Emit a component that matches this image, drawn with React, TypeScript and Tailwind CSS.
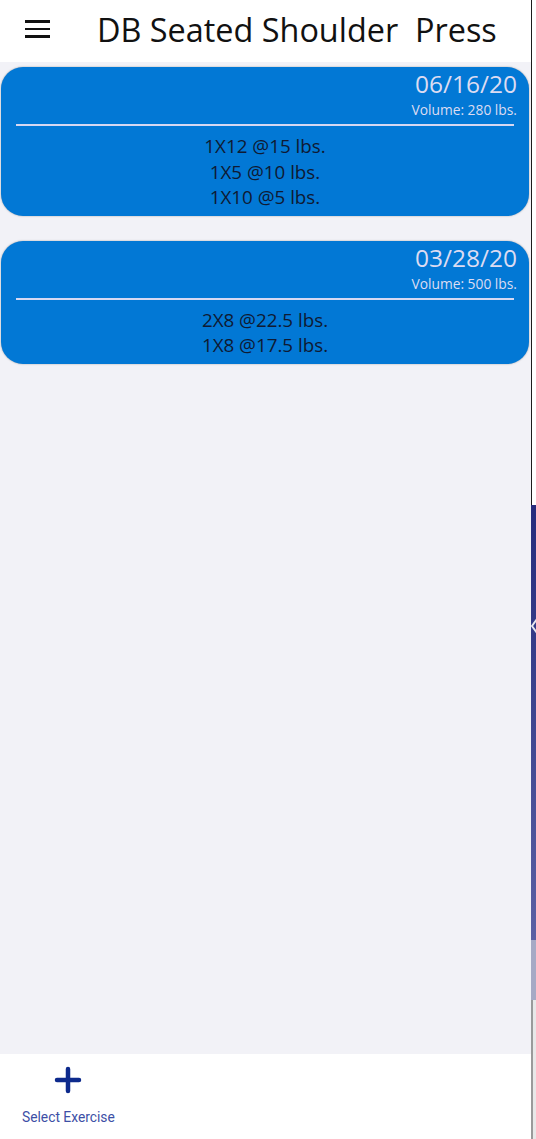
type Workout = {
  date: string;
  volume: number;
  sets: string[];
};

const workouts: Workout[] = [
  { date: "06/16/20", volume: 280, sets: ["1X12 @15 lbs.", "1X5 @10 lbs.", "1X10 @5 lbs."] },
  { date: "03/28/20", volume: 500, sets: ["2X8 @22.5 lbs.", "1X8 @17.5 lbs."] },
];

function WorkoutCard({ workout }: { workout: Workout }) {
  return (
    <li className="ml-px mr-[2px] rounded-[22px] bg-[#0278d5] pb-[5px] pt-[2px] shadow-[0_0_2px_rgba(0,0,0,0.35)]">
      <div className="pr-[12px] text-right text-[#dcdcf2]">
        <p className="text-[24.5px] leading-[29px]">{workout.date}</p>
        <p className="mt-[3px] text-[13.8px] leading-[18px]">Volume: {workout.volume} lbs.</p>
      </div>
      <hr className="mx-[15px] mt-[5px] border-0 border-t-2 border-[#d6d8f2]" />
      <ul className="mt-[8px] text-center text-[18.8px] leading-[25.5px] text-[#0f1a33]">
        {workout.sets.map((set, index) => (
          <li key={index}>{set}</li>
        ))}
      </ul>
    </li>
  );
}

export default function App() {
  return (
    <div className="flex h-[1139px] w-[536px] overflow-hidden font-['Open_Sans',sans-serif]">
      <div className="flex w-[531px] flex-col bg-[#f2f2f7]">
        <header className="flex h-[62px] shrink-0 items-center bg-white pb-[4px]">
          <button className="ml-[25px] flex w-[25px] flex-col gap-[5px]">
            <span className="h-[2.5px] w-full bg-[#111]" />
            <span className="h-[2.5px] w-full bg-[#111]" />
            <span className="h-[2.5px] w-full bg-[#111]" />
          </button>
          <h1 className="ml-[47px] whitespace-pre text-[32.4px] leading-none text-[#111]">
            DB Seated Shoulder  Press
          </h1>
        </header>
        <main className="flex-1">
          <ul className="mt-[5px] space-y-[25px]">
            {workouts.map((workout) => (
              <WorkoutCard key={workout.date} workout={workout} />
            ))}
          </ul>
        </main>
        <nav className="flex h-[85px] shrink-0 bg-white">
          <button className="ml-[22px] flex flex-col items-center pt-[12px] font-['Roboto',sans-serif]">
            <svg width="28" height="28" viewBox="0 0 28 28" fill="none">
              <path d="M14 3v22M3 14h22" stroke="#0d2a8c" strokeWidth="4.5" strokeLinecap="round" />
            </svg>
            <span className="mt-[15px] text-[13.8px] leading-[16px] text-[#3d4fa6]">Select Exercise</span>
          </button>
        </nav>
      </div>
      {/* sliver of the window behind */}
      <div className="flex w-[5px] flex-col">
        <div className="h-[505px] border-l border-[#1c1c1c] bg-white" />
        <div className="relative h-[435px] bg-gradient-to-b from-[#262b7c] to-[#5b60a4]">
          <svg className="absolute left-0 top-[113px]" width="5" height="16" viewBox="0 0 5 16" fill="none">
            <path d="M6 1L1 8l5 7" stroke="#e8e8f0" strokeWidth="2" />
          </svg>
        </div>
        <div className="h-[60px] bg-[#a6a9c5]" />
        <div className="flex-1 border-l-2 border-[#9a9a9a] bg-[#e8e8e8]" />
      </div>
    </div>
  );
}
